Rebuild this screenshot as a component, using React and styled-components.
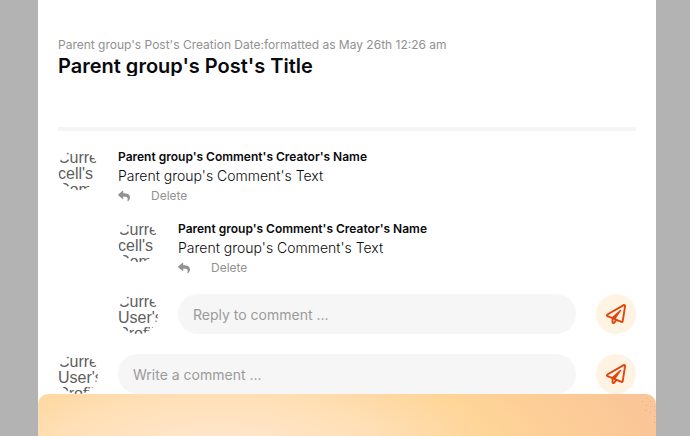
import React from 'react';
import styled, { createGlobalStyle } from 'styled-components';
import { FaReply, FaRegPaperPlane } from 'react-icons/fa';

const GlobalStyle = createGlobalStyle`
  * {
    box-sizing: border-box;
  }

  body {
    margin: 0;
    background-color: #b3b3b3;
    font-family: Inter, "Liberation Sans", sans-serif;
  }
`;

const Page = styled.div`
  min-height: 100vh;
  padding: 0 34px 0 38px;
  display: flex;
`;

const Panel = styled.main`
  flex: 1;
  min-width: 0;
  background-color: #fff;
  display: flex;
  flex-direction: column;
`;

const Content = styled.div`
  padding: 38px 20px 0;
`;

const PostHeader = styled.header`
  height: 93px;
  border-bottom: 4px solid #f5f5f5;
`;

const PostDate = styled.p`
  margin: 0 0 4px;
  font-size: 12px;
  line-height: 14px;
  color: #919191;
`;

const PostTitle = styled.h1`
  margin: 0;
  font-size: 20px;
  font-weight: 600;
  line-height: 20px;
  color: #0a0a0e;
  overflow: hidden;
`;

const Comments = styled.section`
  padding-top: 19px;
`;

const Comment = styled.article`
  display: flex;
  gap: 20px;
  height: 52px;
  margin-bottom: 20px;
  margin-left: ${(props) => (props.$nested ? '60px' : '0')};
`;

const Avatar = styled.div`
  flex: none;
  width: 40px;
  height: 40px;
  border-radius: 50%;
  overflow: hidden;
  font-family: "Liberation Sans", Arial, sans-serif;
  font-size: 16px;
  line-height: 16px;
  color: #5e5e5e;
`;

const CommentBody = styled.div`
  flex: 1;
  min-width: 0;
`;

const CommentAuthor = styled.h2`
  margin: 0 0 4px;
  font-size: 12px;
  font-weight: 600;
  line-height: 14px;
  color: #0a0a0e;
`;

const CommentText = styled.p`
  margin: 0 0 4px;
  font-size: 14px;
  font-weight: 300;
  line-height: 16px;
  color: #0a0a0e;
  overflow: hidden;
`;

const Actions = styled.div`
  display: flex;
  align-items: center;
  gap: 21px;
`;

const ActionButton = styled.button`
  display: flex;
  align-items: center;
  padding: 0;
  border: none;
  background: none;
  font-family: inherit;
  font-size: 12px;
  line-height: 16px;
  color: #919191;
  cursor: pointer;
`;

const CommentForm = styled.form`
  display: flex;
  gap: 20px;
  margin-top: ${(props) => (props.$nested ? '0' : '20px')};
  margin-left: ${(props) => (props.$nested ? '60px' : '0')};
`;

const CommentInput = styled.input`
  flex: 1;
  min-width: 0;
  height: 40px;
  padding: 0 15px;
  border: none;
  border-radius: 20px;
  background-color: #f6f6f6;
  font-family: inherit;
  font-size: 14px;
  color: #0a0a0e;

  &::placeholder {
    color: #9b9b9b;
    opacity: 1;
  }
`;

const SendButton = styled.button`
  flex: none;
  display: flex;
  align-items: center;
  justify-content: center;
  width: 40px;
  height: 40px;
  padding: 0;
  border: none;
  border-radius: 50%;
  background-color: #fff3e4;
  color: #e2450c;
  cursor: pointer;
`;

const Footer = styled.footer`
  flex: 1;
  min-height: 42px;
  display: flex;
  justify-content: flex-end;
  border-radius: 10px 10px 0 0;
  overflow: hidden;
  background: radial-gradient(
    ellipse 440px 150px at 29% 133%,
    #ffe8d2 0%,
    #ffdfb5 37%,
    #ffd598 62%,
    #fac597 100%
  );
`;

const FooterDots = styled.svg`
  width: 16px;
  height: 32px;
  fill: #e3ab82;
`;

const CommentItem = ({ nested }) => {
  return (
    <Comment $nested={nested}>
      <Avatar>Current cell's Comment's Creator's Picture</Avatar>
      <CommentBody>
        <CommentAuthor>Parent group's Comment's Creator's Name</CommentAuthor>
        <CommentText>Parent group's Comment's Text</CommentText>
        <Actions>
          <ActionButton type="button" aria-label="Reply">
            <FaReply size={12} />
          </ActionButton>
          <ActionButton type="button">Delete</ActionButton>
        </Actions>
      </CommentBody>
    </Comment>
  );
};

const CommentBox = ({ nested, placeholder }) => {
  return (
    <CommentForm $nested={nested} onSubmit={(e) => e.preventDefault()}>
      <Avatar>Current User's Profile Picture</Avatar>
      <CommentInput type="text" placeholder={placeholder} aria-label={placeholder} />
      <SendButton type="submit" aria-label="Send">
        <FaRegPaperPlane size={20} />
      </SendButton>
    </CommentForm>
  );
};

const App = () => {
  return (
    <Page>
      <GlobalStyle />
      <Panel>
        <Content>
          <PostHeader>
            <PostDate>Parent group's Post's Creation Date:formatted as May 26th 12:26 am</PostDate>
            <PostTitle>Parent group's Post's Title</PostTitle>
          </PostHeader>
          <Comments>
            <CommentItem />
            <CommentItem nested />
            <CommentBox nested placeholder="Reply to comment ..." />
            <CommentBox placeholder="Write a comment ..." />
          </Comments>
        </Content>
        <Footer>
          <FooterDots viewBox="0 0 16 32" aria-hidden="true">
            <rect x="6" y="4" width="1" height="1" />
            <rect x="2" y="7" width="1" height="1" />
            <rect x="10" y="7" width="1" height="1" />
            <rect x="6" y="11" width="1" height="1" />
            <rect x="10" y="12" width="1" height="1" />
            <rect x="14" y="12" width="1" height="1" />
            <rect x="5" y="16" width="1" height="1" />
            <rect x="14" y="16" width="1" height="1" />
            <rect x="10" y="18" width="1" height="1" />
            <rect x="14" y="22" width="1" height="1" />
            <rect x="14" y="28" width="1" height="1" />
          </FooterDots>
        </Footer>
      </Panel>
    </Page>
  );
};

export default App;
